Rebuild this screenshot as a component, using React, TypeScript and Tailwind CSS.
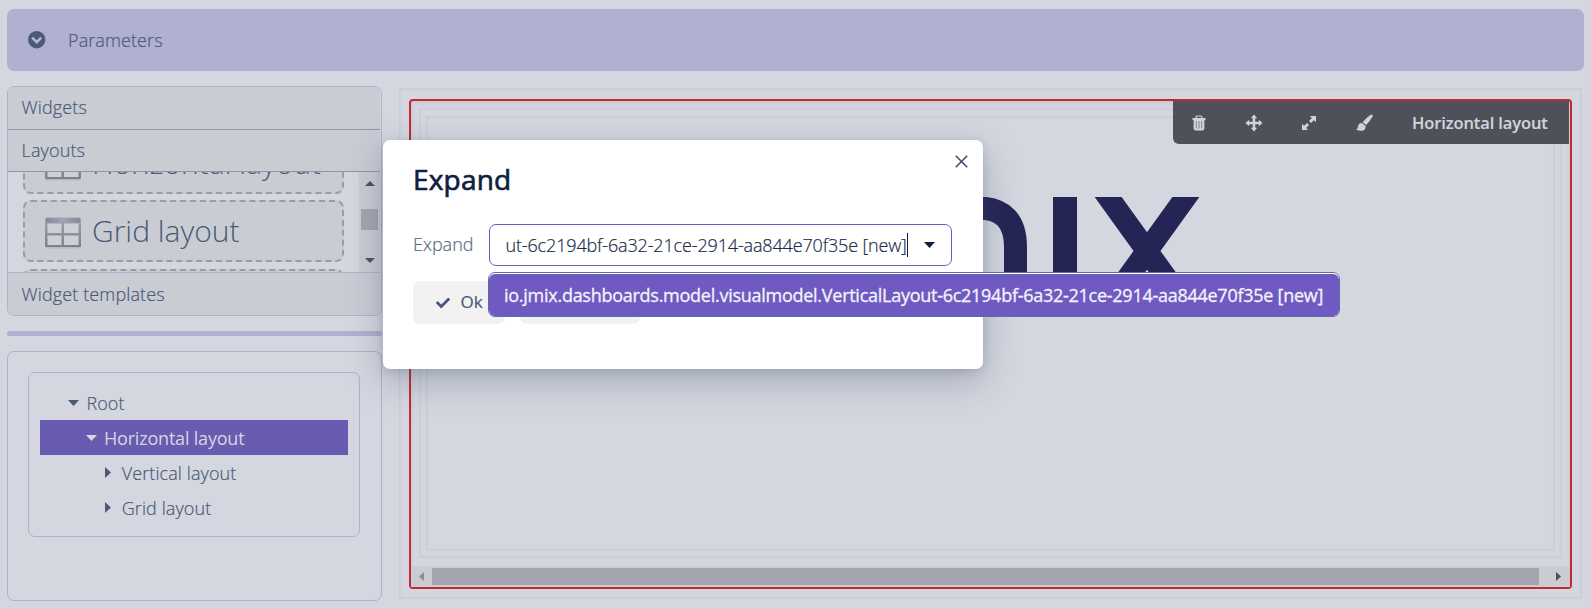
import React from 'react';
import { FaCheck } from 'react-icons/fa';

function TableIcon() {
  return (
    <svg className="h-[33px] w-[36px] shrink-0" viewBox="0 0 36 33">
      <defs>
        <linearGradient id="frame" x1="0" y1="0" x2="0" y2="1">
          <stop offset="0" stopColor="#a3a6b2" />
          <stop offset="1" stopColor="#7d8088" />
        </linearGradient>
        <linearGradient id="bar" x1="0" y1="0" x2="1" y2="0">
          <stop offset="0" stopColor="#858891" />
          <stop offset="0.5" stopColor="#a2a5b7" />
          <stop offset="1" stopColor="#858891" />
        </linearGradient>
      </defs>
      <rect x="0" y="3" width="36" height="29.5" rx="2" fill="#b7bac1" />
      <rect x="0" y="1.5" width="36" height="29.5" rx="1.5" fill="url(#frame)" />
      <rect x="1" y="2" width="34" height="4.5" fill="url(#bar)" />
      <g fill="#cdd0d7">
        <rect x="2.5" y="7.5" width="14" height="9.5" />
        <rect x="19" y="7.5" width="14.5" height="9.5" />
        <rect x="2.5" y="19.5" width="14" height="9.5" />
        <rect x="19" y="19.5" width="14.5" height="9.5" />
      </g>
    </svg>
  );
}

function LayoutCard({ label }: { label?: string }) {
  return (
    <div className="flex h-[62px] w-[321px] shrink-0 items-center rounded-lg border-2 border-dashed border-[#9a9da6] bg-[#c9ccd3] pt-[2px] pl-5">
      <TableIcon />
      {label && (
        <span className="mb-[2px] ml-[11px] text-[30px] leading-none font-light whitespace-nowrap [-webkit-text-stroke:0px]">
          {label}
        </span>
      )}
    </div>
  );
}

function Triangle({ dir, className }: { dir: 'up' | 'down' | 'left' | 'right'; className: string }) {
  const points = {
    up: '0,10 5,0 10,10',
    down: '0,0 10,0 5,10',
    left: '10,0 10,10 0,5',
    right: '0,0 10,5 0,10',
  }[dir];
  return (
    <svg className={className} viewBox="0 0 10 10" preserveAspectRatio="none" fill="currentColor">
      <polygon points={points} />
    </svg>
  );
}

function LeftColumn() {
  return (
    <div className="flex w-[375px] shrink-0 flex-col">
      <div className="flex h-[230px] flex-col overflow-hidden rounded-[7px] border border-[#b1b0d0] pr-px tracking-[0.120px]">
        <div className="h-[43px] shrink-0 border-b border-[#8d97ab] bg-[#c9ccd3] pl-[13.600px] leading-[41px]">Widgets</div>
        <div className="h-[42px] shrink-0 border-b border-[#8d97ab] bg-[#c9ccd3] pl-[13.600px] leading-[41px]">Layouts</div>
        <div className="flex h-[100px] shrink-0 justify-between overflow-hidden pl-[15px] tracking-normal">
          <div className="-mt-[40px] flex flex-col">
            <LayoutCard label="Horizontal layout" />
            <div className="mt-[6px] mb-[7px]">
              <LayoutCard label="Grid layout" />
            </div>
            <LayoutCard />
          </div>
          <div className="flex w-[21px] flex-col items-center bg-[#c9ccd3] text-[#4e5159]">
            <Triangle dir="up" className="mt-[9px] h-[5px] w-[10px] shrink-0" />
            <div className="mt-[23px] h-[21px] w-[17px] shrink-0 bg-[#a3a6ae]" />
            <Triangle dir="down" className="mt-[28px] h-[5px] w-[10px] shrink-0" />
          </div>
        </div>
        <div className="flex-1 border-t border-[#b1b0d0] bg-[#c9ccd3] pl-[13.600px] leading-[43px]">Widget templates</div>
      </div>
      <div className="mt-[15px] h-[5px] shrink-0 rounded-full bg-[#b1b0d0]" />
      <div className="mt-[15px] h-[250px] shrink-0 rounded-[7px] border border-[#b1b0d0] px-5 pt-5">
        <div className="h-[165px] w-[332px] rounded-[7px] border border-[#b1b0d0] px-[11px] pt-[12px]">
          <div className="flex h-[35px] items-center pl-[28px]">
            <Triangle dir="down" className="mr-[7.600px] h-[6px] w-[11px]" />
            <span className="pt-[2px]">Root</span>
          </div>
          <div className="flex h-[35px] items-center bg-[#685bb0] pl-[46px] text-[#d4d7df]">
            <Triangle dir="down" className="mr-[7px] h-[6px] w-[11px]" />
            <span className="pt-[2px] font-normal tracking-[-0.2px] [-webkit-text-stroke:0px]">Horizontal layout</span>
          </div>
          <div className="flex h-[35px] items-center pl-[65px]">
            <Triangle dir="right" className="mr-[10.700px] h-[11px] w-[6px]" />
            <span className="pt-[2px] tracking-[0.1px]">Vertical layout</span>
          </div>
          <div className="flex h-[35px] items-center pl-[65px]">
            <Triangle dir="right" className="mr-[10.700px] h-[11px] w-[6px]" />
            <span className="pt-[2px] tracking-[0.1px]">Grid layout</span>
          </div>
        </div>
      </div>
    </div>
  );
}

function Logo() {
  return (
    <svg className="mt-[80px] ml-[483px] h-[110px] w-[300px]" viewBox="910 197 300 110" fill="none" stroke="#252555">
      <path d="M939.5 310V243Q939.5 208 978 208Q1015.500 208 1015.500 247V310" strokeWidth="23" />
      <path d="M1065 190V310" strokeWidth="24" />
      <path d="M1094.100 177.500L1190.200 311M1199.900 177.500L1103.800 311" strokeWidth="21.900" />
    </svg>
  );
}

function Toolbar() {
  return (
    <div className="absolute top-0 right-px flex h-[43px] w-[396px] items-center rounded-bl-[6px] bg-[#4e5159] text-[#d0d3db]">
      <div className="flex w-[200px] shrink-0 justify-between pt-px pl-[17px]">
        <svg className="h-[18px] w-[18px]" viewBox="0 0 18 18">
          <path d="M6.200 4.500V3q0-1 1-1h3.600q1 0 1 1v1.500" fill="none" stroke="currentColor" strokeWidth="1.200" />
          <path d="M2.500 4h13v2h-13zM3.600 6h10.800v8.500q0 2-2 2H5.600q-2 0-2-2z" fill="currentColor" />
          <path d="M6.300 7v7.500M9 7v7.500M11.700 7v7.500" stroke="#85888f" strokeWidth="1" />
        </svg>
        <svg className="h-[18px] w-[18px]" viewBox="0 0 18 18">
          <path d="M9 3v12M3 9h12" stroke="currentColor" strokeWidth="2.600" />
          <path d="M9 .5 12.200 4.200H5.800zM9 17.500 12.200 13.800H5.800zM.5 9 4.200 5.800v6.400zM17.500 9 13.800 5.800v6.400z" fill="currentColor" />
        </svg>
        <svg className="h-[18px] w-[18px]" viewBox="0 0 18 18">
          <path d="M4.500 13.500 8 10M10 8l3.500-3.500" stroke="currentColor" strokeWidth="3" />
          <path d="M9.800 2h6.200v6.200zM2 9.800V16h6.200z" fill="currentColor" />
        </svg>
        <svg className="h-[18px] w-[18px]" viewBox="0 0 18 18" fill="currentColor">
          <path d="M17.300.8q.8.8-.2 2.500-2.300 4-5.800 7.600L7.600 8.300Q11 4 15 1.300q1.700-1.200 2.300-.5zM6.900 9.100l3.500 2.600q.8 2.600-1.200 4.200-3.300 2-8.200-.3 1.600-.5 1.900-2.600.4-3.800 4-3.900z" />
        </svg>
      </div>
      <span className="ml-[39px] pt-[2px] text-[16.500px] leading-none font-semibold tracking-[-0.120px] whitespace-nowrap [-webkit-text-stroke:0.15px]">
        Horizontal layout
      </span>
    </div>
  );
}

function Canvas() {
  return (
    <div className="ml-[17px] h-[511px] w-[1183px] shrink-0 border border-[#cacdd5] px-[9px] pt-[10px] shadow-[inset_0_0_3px_#c6c9d1]">
      <div className="relative flex h-[490px] w-[1163px] flex-col rounded-[4px] border-2 border-[#c6282f] shadow-[inset_0_1px_5px_#c2c5cd]">
        <div className="mt-[7px] ml-[8px] h-[450px] w-[1143px] shrink-0 border border-[#cacdd5] px-[6px] pt-[7px] shadow-[inset_0_0_3px_#c6c9d1]">
          <div className="h-[435px] w-[1129px] overflow-hidden border border-[#cacdd5] shadow-[inset_0_0_3px_#c6c9d1]">
            <Logo />
          </div>
        </div>
        <div className="mt-[8px] flex h-[21px] shrink-0 items-center bg-[#c9ccd3]">
          <Triangle dir="left" className="mr-[8px] ml-[8px] h-[9px] w-[5px] text-[#8b8e96]" />
          <div className="h-[17px] w-[1107px] bg-[#a3a6ae]" />
          <Triangle dir="right" className="ml-[17px] h-[9px] w-[5px] text-[#4e5159]" />
        </div>
        <Toolbar />
      </div>
    </div>
  );
}

function ExpandDialog() {
  return (
    <div className="absolute top-[140px] left-[383px] h-[229px] w-[600px] rounded-[7px] bg-white px-[30px] pt-[24px] shadow-[0_12px_36px_rgba(60,72,100,0.32),0_2px_8px_rgba(60,72,100,0.18)]">
      <svg className="absolute top-[15px] right-[15px] h-[13px] w-[13px]" viewBox="0 0 13 13" stroke="#3c4d6e" strokeWidth="1.600">
        <path d="M.8.8 12.200 12.200M12.200.8.8 12.200" />
      </svg>
      <h2 className="h-[32px] text-[28px] leading-[31px] font-normal tracking-[0.2px] text-[#0e1f42] [-webkit-text-stroke:0.7px]">Expand</h2>
      <div className="mt-[28px] flex h-[42px] items-center">
        <span className="w-[76px] shrink-0 pb-[2px] text-[#5c6982]">Expand</span>
        <div className="flex h-[42px] w-[463px] items-center rounded-[7px] border border-[#6f5bc1] pl-[15.500px] text-[#1b2b4c]">
          <span className="w-[401.500px] tracking-[-0.150px] whitespace-nowrap">ut-6c2194bf-6a32-21ce-2914-aa844e70f35e [new]</span>
          <span className="h-[24px] w-px bg-[#0e1f42]" />
          <Triangle dir="down" className="ml-[16px] h-[6px] w-[11px] text-[#0e1f42]" />
        </div>
      </div>
      <div className="mt-[15px] flex gap-[15px]">
        <div className="flex h-[43px] w-[92px] items-center rounded-[7px] bg-[#f2f2f2] pl-[23px] text-[#4a5a78]">
          <FaCheck className="h-[14px] w-[14px]" />
          <span className="mb-[2px] ml-[10.500px] text-[17px] font-normal">Ok</span>
        </div>
        <div className="h-[43px] w-[120px] rounded-[7px] bg-[#f2f2f2]" />
      </div>
      <div className="absolute top-[132px] left-[105px] h-[45px] w-[852px] rounded-[7px] border border-[#5f6d9b] bg-white pt-px">
        <div className="h-[42px] rounded-[6px] bg-[#6e5ac0] pl-[15px] leading-[42px] font-normal tracking-[-0.265px] whitespace-nowrap text-[#f4f2fb] [-webkit-text-stroke:0.3px]">
          io.jmix.dashboards.model.visualmodel.VerticalLayout-6c2194bf-6a32-21ce-2914-aa844e70f35e [new]
        </div>
      </div>
    </div>
  );
}

export default function App() {
  return (
    <div className="relative h-[609px] w-[1591px] overflow-hidden bg-[#d4d7df] px-[7px] pt-[9px] font-['Open_Sans',sans-serif] text-[18px] font-light text-[#4a5a78] [-webkit-text-stroke:0.2px]">
      <div className="flex h-[62px] w-[1577px] items-center rounded-[7px] bg-[#b1b0d0] pl-[20.500px]">
        <svg className="h-[18px] w-[18px]" viewBox="0 0 18 18">
          <circle cx="8.700" cy="8.700" r="8.700" fill="#4a5a78" />
          <path d="M4.200 6.700 8.700 11.200 13.200 6.700" fill="none" stroke="#b9b8d6" strokeWidth="2.600" />
        </svg>
        <span className="ml-[22.500px] tracking-[0.1px]">Parameters</span>
      </div>
      <div className="mt-[15px] flex">
        <LeftColumn />
        <div className="mt-[2px]">
          <Canvas />
        </div>
      </div>
      <ExpandDialog />
    </div>
  );
}
